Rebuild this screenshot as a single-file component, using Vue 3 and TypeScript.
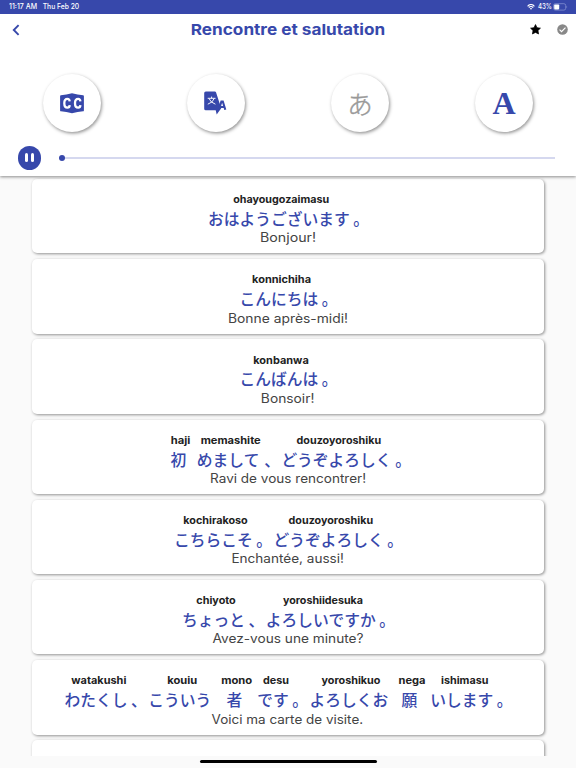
<script setup lang="ts">
import { nextTick, type ObjectDirective } from 'vue'

interface Word {
  jp: string
  romaji?: string
  width?: number
}

interface Phrase {
  words: Word[]
  translation: string
  width: number
}

// Stretches a label horizontally so that it fills the given width.
const vFit: ObjectDirective<HTMLElement, number | undefined> = {
  mounted(el, binding) {
    nextTick(() => {
      if (binding.value && el.offsetWidth) {
        const natural = el.getBoundingClientRect().width
        el.style.transform = `scaleX(${binding.value / natural})`
      }
    })
  },
}

const phrases: Phrase[] = [
  {
    words: [{ jp: 'おはようございます', romaji: 'ohayougozaimasu', width: 96 }, { jp: '。' }],
    translation: 'Bonjour!',
    width: 56,
  },
  {
    words: [{ jp: 'こんにちは', romaji: 'konnichiha', width: 59 }, { jp: '。' }],
    translation: 'Bonne après-midi!',
    width: 120,
  },
  {
    words: [{ jp: 'こんばんは', romaji: 'konbanwa', width: 55.5 }, { jp: '。' }],
    translation: 'Bonsoir!',
    width: 53.5,
  },
  {
    words: [
      { jp: '初', romaji: 'haji', width: 19.5 },
      { jp: 'めまして', romaji: 'memashite', width: 60 },
      { jp: '、' },
      { jp: 'どうぞよろしく', romaji: 'douzoyoroshiku', width: 84.5 },
      { jp: '。' },
    ],
    translation: 'Ravi de vous rencontrer!',
    width: 156,
  },
  {
    words: [
      { jp: 'こちらこそ', romaji: 'kochirakoso', width: 64.5 },
      { jp: '。' },
      { jp: 'どうぞよろしく', romaji: 'douzoyoroshiku', width: 84.5 },
      { jp: '。' },
    ],
    translation: 'Enchantée, aussi!',
    width: 112.5,
  },
  {
    words: [
      { jp: 'ちょっと', romaji: 'chiyoto', width: 39.5 },
      { jp: '、' },
      { jp: 'よろしいですか', romaji: 'yoroshiidesuka', width: 80 },
      { jp: '。' },
    ],
    translation: 'Avez-vous une minute?',
    width: 151,
  },
  {
    words: [
      { jp: 'わたくし', romaji: 'watakushi', width: 55 },
      { jp: '、' },
      { jp: 'こういう', romaji: 'kouiu', width: 30 },
      { jp: '者', romaji: 'mono', width: 31 },
      { jp: 'です', romaji: 'desu', width: 26 },
      { jp: '。' },
      { jp: 'よろしくお', romaji: 'yoroshikuo', width: 59 },
      { jp: '願', romaji: 'nega', width: 27 },
      { jp: 'いします', romaji: 'ishimasu', width: 47.5 },
      { jp: '。' },
    ],
    translation: 'Voici ma carte de visite.',
    width: 151.5,
  },
]
</script>

<template>
  <div class="screen">
    <div class="status">
      <div class="slot time"><span v-fit="28">11:17 AM</span></div>
      <div class="slot date"><span v-fit="36.5">Thu Feb 20</span></div>
      <svg class="wifi" viewBox="0 0 16 12">
        <path d="M1.2 4.6C5-.2 11-.2 14.8 4.6M3.7 7.2C6 4.2 10 4.2 12.3 7.2" fill="none" stroke="currentColor" stroke-width="2.2" />
        <path d="M5.6 9Q8 6.5 10.4 9L8 11.7Z" fill="currentColor" />
      </svg>
      <div class="slot charge"><span v-fit="14">43%</span></div>
      <svg class="battery" viewBox="0 0 15 8">
        <rect x=".5" y=".7" width="12.2" height="6.4" rx="1.8" fill="none" stroke="#8d98d7" stroke-width=".7" />
        <rect x="1.2" y="1.4" width="5" height="5" rx=".8" fill="#fff" />
        <path d="M13.5 2.7Q15 3.9 13.5 5.1Z" fill="#8d98d7" />
      </svg>
    </div>

    <header class="panel">
      <div class="titlebar">
        <svg class="back" viewBox="0 0 8 12"><path d="M6.6 1.2 1.8 6l4.8 4.8" fill="none" stroke="currentColor" stroke-width="1.9" /></svg>
        <h1><span v-fit="194.5">Rencontre et salutation</span></h1>
        <svg class="star" viewBox="0 0 24 24"><path d="M12 1.2 15.3 8l7.5 1.1-5.4 5.3 1.3 7.4L12 18.3l-6.7 3.5 1.3-7.4L1.2 9.1 8.7 8Z" fill="#000" stroke="#000" stroke-width="1.5" stroke-linejoin="round" /></svg>
        <svg class="check" viewBox="0 0 24 24"><circle cx="12" cy="12" r="11.5" fill="#888" /><path d="m5.6 12.4 4.3 4.3 8.6-9" fill="none" stroke="#fff" stroke-width="2.5" /></svg>
      </div>

      <div class="tools">
        <button class="tool">
          <svg viewBox="0 0 34 34">
            <path d="M5.9 9.3Q11.3 8.8 17 7.2q5.7 1.6 11.1 2.1.8.1.8.9v14.2q0 .8-.8.9-5.4.5-11.1 2-5.7-1.5-11.1-2-.8-.1-.8-.9V10.2q0-.8.8-.9Z" fill="currentColor" />
            <path d="M14.7 15.3c-.2-1.7-1-2.5-2.2-2.5-2 0-3.2 1.8-3.2 4.4s1.2 4.4 3.2 4.4c1.2 0 2.1-.8 2.2-2.5M25.4 15.3c-.2-1.7-1-2.5-2.2-2.5-2 0-3.2 1.8-3.2 4.4s1.2 4.4 3.2 4.4c1.2 0 2.1-.8 2.2-2.5" fill="none" stroke="#fff" stroke-width="2.3" />
          </svg>
        </button>
        <button class="tool">
          <svg viewBox="0 0 34 34">
            <path d="M6.8 5.5h9.1q.8 0 1.1.8l5.2 16-4.5 6.3-1-4.3H6.8q-1.6 0-1.6-1.6V7.1q0-1.6 1.6-1.6Z" fill="currentColor" />
            <path d="M8.7 12.3h7.8M12.6 10.6v1.7M10 12.5q1.5 4 6.4 5.7M15.2 12.5q-1.3 4-6.4 5.7" fill="none" stroke="#fff" stroke-width=".95" />
            <path d="m19.9 23.8 2.5-8.3h1.4l2.5 8.3M20.5 21h5" fill="none" stroke="currentColor" stroke-width="2.1" />
          </svg>
        </button>
        <button class="tool kana">あ</button>
        <button class="tool letter">A</button>
      </div>

      <div class="player">
        <button class="pause"><i /><i /></button>
        <div class="track"><span class="thumb" /></div>
      </div>
    </header>

    <main class="list">
      <article v-for="phrase in phrases" :key="phrase.translation" class="card">
        <div class="sentence">
          <div v-for="(word, i) in phrase.words" :key="i" class="word">
            <div class="romaji" :style="{ width: word.width ? word.width + 'px' : undefined }">
              <span v-if="word.romaji" v-fit="word.width">{{ word.romaji }}</span>
            </div>
            <div class="jp" :class="{ mark: !word.romaji }">{{ word.jp }}</div>
          </div>
        </div>
        <div class="translation"><span v-fit="phrase.width">{{ phrase.translation }}</span></div>
      </article>
      <article class="card" />
    </main>
    <div class="home"><span /></div>
  </div>
</template>

<style>
body {
  margin: 0;
  overflow: hidden;
}
</style>

<style scoped>
.screen {
  width: 576px;
  height: 768px;
  display: flex;
  flex-direction: column;
  overflow: hidden;
  background: #fafafa;
  font-family: Inter, 'Noto Sans CJK JP', sans-serif;
  color: #3748ab;
}
.screen * {
  box-sizing: border-box;
}
svg {
  display: block;
  flex: none;
}
button {
  border: 0;
  padding: 0;
  background: none;
  color: inherit;
}
.status {
  height: 13.5px;
  flex: none;
  display: flex;
  align-items: center;
  padding: 0 8px 0 9px;
  background: #3748ab;
  color: #fff;
  font-size: 7px;
  font-weight: 500;
  z-index: 3;
}
.slot {
  display: flex;
  justify-content: center;
  white-space: nowrap;
}
.slot span {
  flex: none;
}
.time {
  width: 28px;
}
.date {
  width: 36.5px;
  margin-left: 6px;
}
.wifi {
  width: 8px;
  height: 6px;
  margin-left: auto;
}
.charge {
  width: 14px;
  margin: 0 1.5px 0 2.5px;
}
.battery {
  width: 15px;
  height: 8px;
}
.panel {
  height: 162.5px;
  flex: none;
  background: #fff;
  position: relative;
  z-index: 2;
  box-shadow: 0 1px 3px rgba(0, 0, 0, 0.45);
}
.titlebar {
  height: 32px;
  display: grid;
  grid-template-columns: 60px 1fr 33px 27px;
  align-items: center;
}
.back {
  width: 8px;
  height: 12px;
  margin-left: 12px;
}
.titlebar h1 {
  margin: 0;
  padding-top: 1px;
  display: flex;
  justify-content: center;
  font-size: 15.2px;
  line-height: 20px;
  font-weight: 700;
  white-space: nowrap;
}
.star {
  width: 11px;
  height: 11px;
  margin-left: 13.5px;
}
.check {
  width: 11px;
  height: 11px;
  margin-left: 7.5px;
}
.tools {
  height: 115px;
  display: grid;
  grid-template-columns: repeat(4, 1fr);
  place-items: center;
}
.tool {
  width: 58px;
  height: 58px;
  border-radius: 50%;
  background: #fff;
  display: flex;
  align-items: center;
  justify-content: center;
  box-shadow: 1px 1.5px 3.5px rgba(0, 0, 0, 0.42);
}
.tool svg {
  width: 34px;
  height: 34px;
}
.kana {
  font: 300 25.5px/34px 'Noto Sans CJK JP', sans-serif;
  -webkit-text-stroke: 0.4px #999;
  color: #999;
}
.letter {
  font: 700 32px/34px 'Liberation Serif', serif;
}
.player {
  height: 15.5px;
  display: flex;
  align-items: center;
  margin-top: -10.5px;
  padding: 0 21px 0 17.5px;
}
.pause {
  width: 23.5px;
  height: 23.5px;
  border-radius: 50%;
  background: #3748ab;
  display: flex;
  align-items: center;
  justify-content: center;
  gap: 2.5px;
}
.pause i {
  width: 3px;
  height: 9px;
  border-radius: 1.5px;
  background: #fff;
}
.track {
  flex: 1;
  height: 2px;
  margin-left: 18px;
  background: #d5d8ef;
  display: flex;
  align-items: center;
}
.thumb {
  width: 6px;
  height: 6px;
  border-radius: 50%;
  background: #3748ab;
}
.list {
  height: 580px;
  flex: none;
  overflow: hidden;
  padding: 3px 32px 0 31.5px;
  display: flex;
  flex-direction: column;
  gap: 5.8px;
}
.card {
  height: 74.4px;
  flex: none;
  background: #fff;
  border-radius: 5px;
  box-shadow: 1px 1px 3px rgba(0, 0, 0, 0.42);
  padding-top: 13.3px;
}
.sentence {
  display: flex;
  justify-content: center;
  padding-left: 3px;
}
.word {
  display: flex;
  flex-direction: column;
  align-items: center;
}
.romaji {
  height: 15.7px;
  margin: 0 5px;
  display: flex;
  justify-content: center;
  font-size: 9.9px;
  line-height: 15px;
  font-weight: 650;
  color: #222;
  white-space: nowrap;
}
.jp {
  height: 21.5px;
  padding-right: 5px;
  font: 500 15.75px/21.5px 'Noto Sans CJK JP', sans-serif;
  white-space: nowrap;
}
.jp.mark {
  margin-left: -1.5px;
  padding-right: 1.5px;
}
.translation {
  display: flex;
  justify-content: center;
  font-size: 12.7px;
  line-height: 18px;
  color: #444;
  white-space: nowrap;
}
.home {
  flex: 1;
  display: flex;
  justify-content: center;
  padding-top: 4px;
}
.home span {
  width: 177px;
  height: 3px;
  border-radius: 2px;
  background: #000;
}
</style>
